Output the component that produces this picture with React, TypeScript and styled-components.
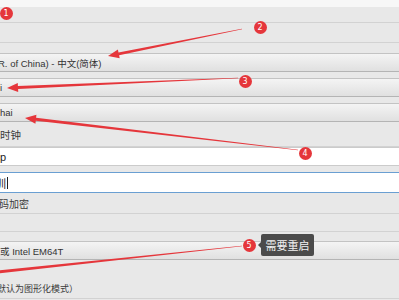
import React from "react";
import styled, { createGlobalStyle } from "styled-components";

const Global = createGlobalStyle`
  html, body { margin: 0; padding: 0; background: #e8e8e8; }
  body { font-family: "Liberation Sans", "Noto Sans CJK SC", sans-serif; }
`;

const Page = styled.div`
  position: relative;
  width: 399px;
  height: 300px;
  overflow: hidden;
  background: #e8e8e8;
  display: flex;
  flex-direction: column;
`;

const TopStrip = styled.div`
  height: 7px;
  flex-shrink: 0;
  background: #f7f7f7;
`;

const Row = styled.div<{ $h: number; $end?: boolean; $fs?: number }>`
  height: ${(p) => p.$h}px;
  flex-shrink: 0;
  box-sizing: border-box;
  border-bottom: 1px solid #d2d2d2;
  display: flex;
  align-items: ${(p) => (p.$end ? "flex-end" : "center")};
  padding-bottom: ${(p) => (p.$end ? 3 : 0)}px;
  font-size: ${(p) => p.$fs ?? 10}px;
  color: #3a3a3a;
`;

const Field = styled.div<{ $top: number }>`
  flex-shrink: 0;
  padding-top: ${(p) => p.$top}px;
  margin: 0 -4px;
`;

const Select = styled.div`
  height: 19px;
  box-sizing: border-box;
  border: 1px solid #c3c3c3;
  border-bottom-color: #b4b4b4;
  border-radius: 2px;
  background: linear-gradient(#f4f4f4, #e0e0e0);
  display: flex;
  align-items: center;
  padding-left: 4px;
  font-size: 9.5px;
  color: #333;
  white-space: nowrap;
`;

const Input = styled.div<{ $focus?: boolean }>`
  height: ${(p) => (p.$focus ? 21 : 19)}px;
  box-sizing: border-box;
  border: 1px solid ${(p) => (p.$focus ? "#6a9fd2" : "#cbcbcb")};
  background: #ffffff;
  display: flex;
  align-items: center;
  padding-left: 4px;
  font-size: 11px;
  color: #222;
  white-space: nowrap;
`;

const Text = styled.span<{ $shift?: number }>`
  margin-left: ${(p) => p.$shift ?? 0}px;
  white-space: nowrap;
`;

const Caret = styled.span`
  display: inline-block;
  width: 1px;
  height: 12px;
  background: #222;
  margin-left: 1px;
`;

const Overlay = styled.svg`
  position: absolute;
  left: 0;
  top: 0;
  pointer-events: none;
`;

const Badge = styled.div<{ $x: number; $y: number }>`
  position: absolute;
  left: ${(p) => p.$x - 6.5}px;
  top: ${(p) => p.$y - 6.5}px;
  width: 13px;
  height: 13px;
  border-radius: 50%;
  background: #e5363b;
  color: #fff;
  font-family: "DejaVu Sans", sans-serif;
  font-size: 8px;
  line-height: 13px;
  text-align: center;
`;

const Tooltip = styled.div`
  position: absolute;
  left: 261px;
  top: 234px;
  width: 53px;
  height: 22px;
  box-sizing: border-box;
  background: #4b4b4b;
  border-radius: 2px;
  color: #f2f2f2;
  font-family: "Noto Sans CJK SC", sans-serif;
  font-size: 11px;
  line-height: 22px;
  text-align: center;
  &::before {
    content: "";
    position: absolute;
    left: -3px;
    top: 8px;
    border-top: 3px solid transparent;
    border-bottom: 3px solid transparent;
    border-right: 3px solid #4b4b4b;
  }
`;

type Pt = [number, number];

function arrowPoints(s: Pt, t: Pt): string {
  const dx = t[0] - s[0];
  const dy = t[1] - s[1];
  const len = Math.hypot(dx, dy);
  const ux = dx / len;
  const uy = dy / len;
  const nx = -uy;
  const ny = ux;
  const H = 11;
  const W = 4.5;
  const b: Pt = [t[0] - ux * H, t[1] - uy * H];
  const pts: Pt[] = [
    [s[0] + nx * 0.3, s[1] + ny * 0.3],
    [b[0] + nx * 1.5, b[1] + ny * 1.5],
    [b[0] + nx * W, b[1] + ny * W],
    t,
    [b[0] - nx * W, b[1] - ny * W],
    [b[0] - nx * 1.5, b[1] - ny * 1.5],
    [s[0] - nx * 0.3, s[1] - ny * 0.3],
  ];
  return pts.map((p) => `${p[0].toFixed(1)},${p[1].toFixed(1)}`).join(" ");
}

const arrows: [Pt, Pt][] = [
  [[242, 29], [108, 56]],
  [[238, 78], [7, 88]],
  [[298, 150], [25, 118]],
  [[242, 246], [-12, 273]],
];

const badges = [
  { n: 1, x: 6, y: 13 },
  { n: 2, x: 260, y: 27 },
  { n: 3, x: 245, y: 81 },
  { n: 4, x: 305, y: 153 },
  { n: 5, x: 249, y: 245 },
];

export default function App() {
  return (
    <Page>
      <Global />
      <TopStrip />
      <Row $h={16} />
      <Row $h={20} />
      <Field $top={10}>
        <Select>
          <Text $shift={-3}>R. of China) - 中文(简体)</Text>
        </Select>
      </Field>
      <Field $top={6}>
        <Select>
          <Text $shift={-1}>i</Text>
        </Select>
      </Field>
      <Field $top={6}>
        <Select>
          <Text $shift={-1}>hai</Text>
        </Select>
      </Field>
      <Row $h={25} $fs={10.5}>
        <Text $shift={0}>时钟</Text>
      </Row>
      <Field $top={0}>
        <Input>
          <Text $shift={-1}>p</Text>
        </Input>
      </Field>
      <Field $top={6}>
        <Input $focus>
          <Text $shift={-6}>训</Text>
          <Caret />
        </Input>
      </Field>
      <Row $h={21} $fs={10}>
        <Text $shift={-1}>码加密</Text>
      </Row>
      <Row $h={18} />
      <Field $top={9}>
        <Select>
          <Text $shift={-1}>或 Intel EM64T</Text>
        </Select>
      </Field>
      <Row $h={39} $end $fs={9}>
        <Text $shift={-3}>默认为图形化模式）</Text>
      </Row>
      <Overlay width={399} height={300} viewBox="0 0 399 300">
        {arrows.map(([s, t], i) => (
          <polygon key={i} points={arrowPoints(s, t)} fill="#e5363b" />
        ))}
      </Overlay>
      {badges.map((b) => (
        <Badge key={b.n} $x={b.x} $y={b.y}>
          {b.n}
        </Badge>
      ))}
      <Tooltip>需要重启</Tooltip>
    </Page>
  );
}
